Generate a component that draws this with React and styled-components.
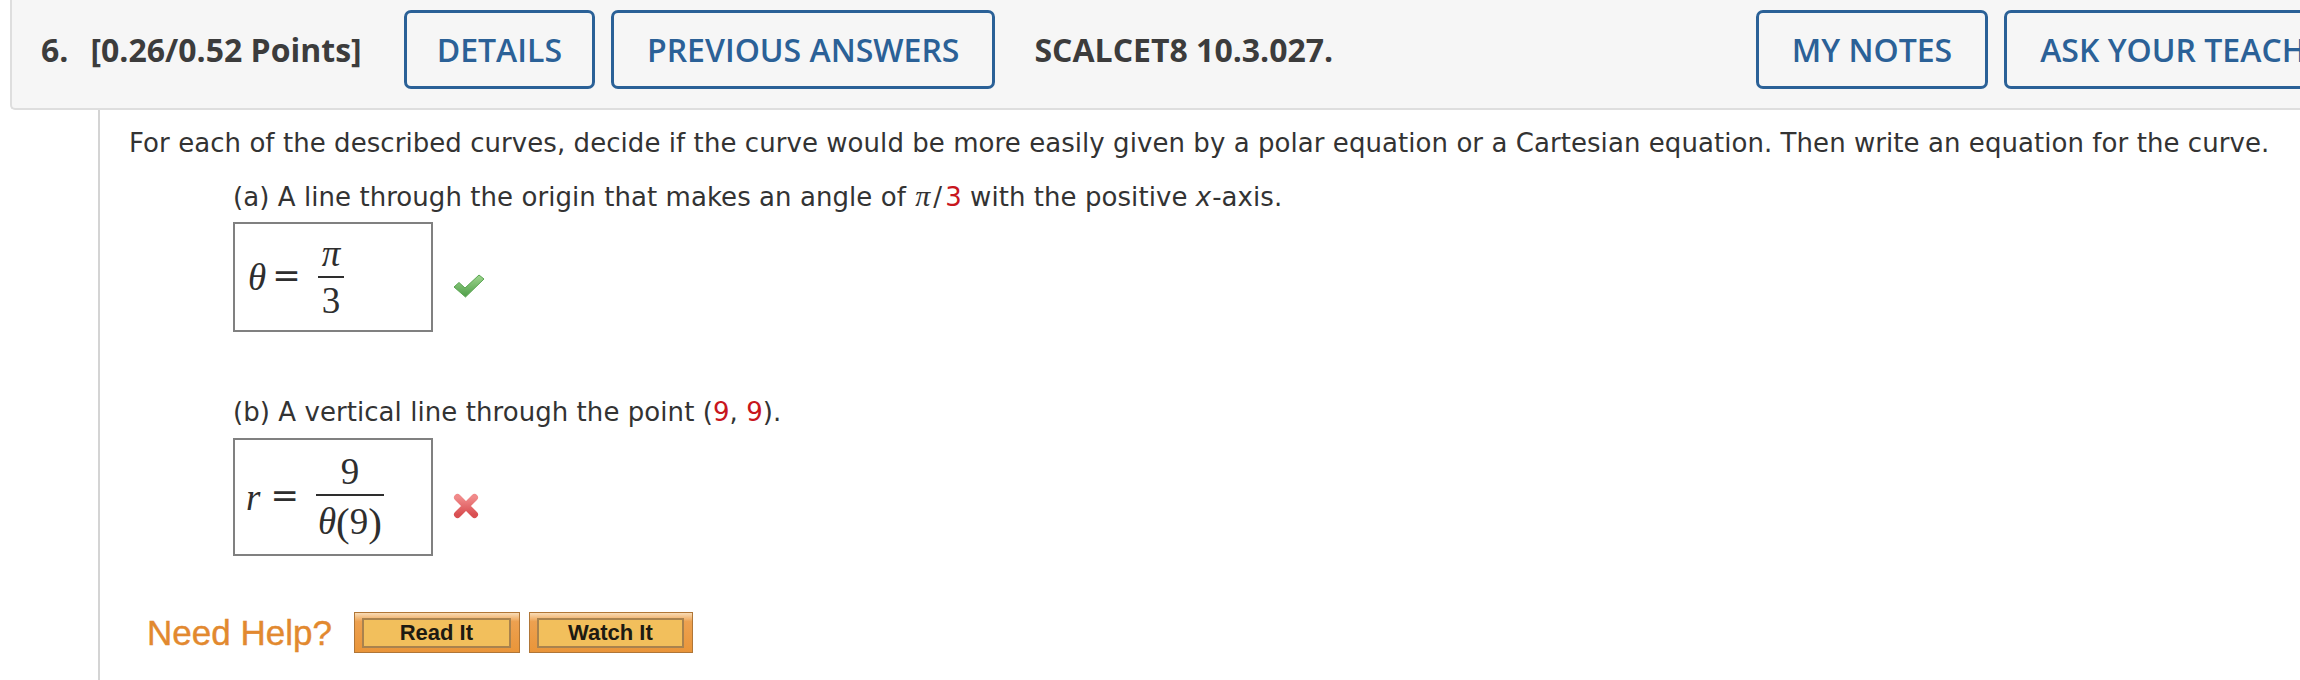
import React from 'react';
import styled, { createGlobalStyle } from 'styled-components';

const GlobalStyle = createGlobalStyle`
  html, body {
    margin: 0;
    padding: 0;
    background: #ffffff;
    overflow: hidden;
  }
  body {
    font-family: "DejaVu Sans", Verdana, sans-serif;
  }
`;

const Page = styled.div`
  width: 2430px;
  padding-left: 10px;
  box-sizing: border-box;
`;

const Header = styled.header`
  display: flex;
  align-items: center;
  box-sizing: border-box;
  height: 110px;
  padding: 10px 50px 19px 29px;
  background: #f6f6f6;
  border-left: 2px solid #dedede;
  border-bottom: 2px solid #dedede;
  border-bottom-left-radius: 5px;
  font-family: "Open Sans", "Liberation Sans", sans-serif;
`;

const HeadText = styled.span`
  font-size: 32px;
  font-weight: 700;
  color: #3c3c3c;
  white-space: nowrap;
  margin-right: ${(p) => p.$gap || 0}px;
  margin-left: ${(p) => p.$lead || 0}px;
`;

const ButtonGroup = styled.div`
  display: flex;
  gap: 16px;
  margin-left: ${(p) => (p.$right ? 'auto' : '0')};
`;

const HeadButton = styled.button`
  box-sizing: border-box;
  height: 79px;
  padding: 0 ${(p) => p.$px || 33}px;
  background: transparent;
  border: 3px solid #2b6197;
  border-radius: 7px;
  font-family: "Open Sans", "Liberation Sans", sans-serif;
  font-size: 32px;
  font-weight: 600;
  color: #2b6197;
  white-space: nowrap;
  cursor: pointer;
`;

const Body = styled.div`
  margin-left: 88px;
  border-left: 2px solid #d4d4d4;
  padding: 15px 0 0 29px;
  min-height: 600px;
  color: #333333;
  font-size: 26px;
  line-height: 36px;
  letter-spacing: 0.06px;
`;

const Para = styled.p`
  margin: 0;
  white-space: nowrap;
`;

const Part = styled.div`
  margin-left: 104px;
  margin-top: ${(p) => p.$top}px;
`;

const Prompt = styled.p`
  margin: 0;
  white-space: nowrap;
`;

const Red = styled.span`
  color: #c8161d;
`;

const MathPi = styled.span`
  font-family: "Liberation Serif", "DejaVu Serif", serif;
  font-style: italic;
  font-size: 30px;
  margin: 0 3px 0 1px;
`;

const Slash = styled.span`
  margin-right: 3px;
`;

const Em = styled.span`
  font-style: italic;
  letter-spacing: 1px;
`;

const AnswerRow = styled.div`
  display: flex;
  align-items: center;
  margin-top: ${(p) => p.$top}px;
`;

const MathBox = styled.div`
  box-sizing: border-box;
  width: 200px;
  height: ${(p) => p.$h}px;
  padding-left: ${(p) => p.$pl}px;
  border: 2px solid #808080;
  display: flex;
  align-items: center;
  font-family: "Liberation Serif", "DejaVu Serif", serif;
  font-size: 37px;
  line-height: 1;
  letter-spacing: 0;
  color: #2e2e2e;
`;

const MathVar = styled.span`
  font-style: italic;
`;

const Eq = styled.span`
  font-family: "DejaVu Serif", "Liberation Serif", serif;
  font-size: 34px;
  margin: 0 17px 0 ${(p) => p.$ml}px;
  position: relative;
  top: -2px;
`;

const Frac = styled.span`
  display: inline-flex;
  flex-direction: column;
  align-items: stretch;
`;

const Num = styled.span`
  text-align: center;
  padding: 0 4px 4px;
`;

const Den = styled.span`
  text-align: center;
  padding: ${(p) => p.$pt}px 2px 0;
  border-top: 2px solid #2e2e2e;
`;

const Paren = styled.span`
  font-size: 41px;
  position: relative;
  top: 2px;
`;

const StatusIcon = styled.span`
  display: inline-flex;
  margin-left: 20px;
  margin-top: 17px;
`;

const HelpRow = styled.div`
  display: flex;
  align-items: center;
  margin: 56px 0 0 18px;
  letter-spacing: 0;
`;

const NeedHelp = styled.span`
  font-family: "Liberation Sans", Arial, sans-serif;
  font-size: 35px;
  line-height: 1;
  color: #e2892f;
  margin-right: 22px;
  white-space: nowrap;
  -webkit-text-stroke: 0.4px #e2892f;
`;

const HelpButton = styled.button`
  box-sizing: border-box;
  display: flex;
  width: ${(p) => p.$w}px;
  height: 41px;
  padding: 5px 8px 4px 7px;
  margin-right: 9px;
  border: 1px solid #b07637;
  background: linear-gradient(#f9dcb6 0%, #eda150 22%, #e99539 100%);
  cursor: pointer;
`;

const HelpInner = styled.span`
  flex: 1;
  display: flex;
  align-items: center;
  justify-content: center;
  border: 2px solid #a9824d;
  background: #f2bf5c;
  font-family: "Liberation Sans", Arial, sans-serif;
  font-weight: 700;
  font-size: 22px;
  color: #1d1a12;
`;

function CheckIcon() {
  return (
    <svg width="32" height="26" viewBox="0 0 32 26">
      <defs>
        <linearGradient id="gchk" x1="0" y1="0" x2="0" y2="1">
          <stop offset="0" stopColor="#9fd68e" />
          <stop offset="1" stopColor="#4f9e49" />
        </linearGradient>
      </defs>
      <path
        d="M1 14 L6 9.5 L12 15 L26 2 L31 6 L12.5 24 Z"
        fill="url(#gchk)"
        stroke="#5aa552"
        strokeWidth="1"
        strokeLinejoin="round"
      />
    </svg>
  );
}

function CrossIcon() {
  return (
    <svg width="26" height="26" viewBox="0 0 26 26">
      <defs>
        <linearGradient id="gx" x1="0" y1="0" x2="0" y2="1">
          <stop offset="0" stopColor="#f08a8a" />
          <stop offset="1" stopColor="#d94f52" />
        </linearGradient>
      </defs>
      <path
        d="M4.5 4.5 L21.5 21.5 M21.5 4.5 L4.5 21.5"
        stroke="url(#gx)"
        strokeWidth="7"
        strokeLinecap="round"
        fill="none"
      />
    </svg>
  );
}

export default function App() {
  return (
    <Page>
      <GlobalStyle />
      <Header>
        <HeadText $gap={22}>6.</HeadText>
        <HeadText $gap={42}>[0.26/0.52 Points]</HeadText>
        <ButtonGroup>
          <HeadButton $px={30}>DETAILS</HeadButton>
          <HeadButton>PREVIOUS ANSWERS</HeadButton>
        </ButtonGroup>
        <HeadText $lead={39}>SCALCET8 10.3.027.</HeadText>
        <ButtonGroup $right>
          <HeadButton>MY NOTES</HeadButton>
          <HeadButton>ASK YOUR TEACHER</HeadButton>
        </ButtonGroup>
      </Header>
      <Body>
        <Para>
          For each of the described curves, decide if the curve would be more easily given by a polar
          equation or a Cartesian equation. Then write an equation for the curve.
        </Para>
        <Part $top={17}>
          <Prompt>
            (a) A line through the origin that makes an angle of <MathPi>π</MathPi>
            <Slash>/</Slash>
            <Red>3</Red> with the positive <Em>x</Em>-axis.
          </Prompt>
          <AnswerRow $top={7}>
            <MathBox $h={110} $pl={13}>
              <MathVar>θ</MathVar>
              <Eq $ml={6}>=</Eq>
              <Frac>
                <Num>
                  <MathVar>π</MathVar>
                </Num>
                <Den $pt={4}>3</Den>
              </Frac>
            </MathBox>
            <StatusIcon>
              <CheckIcon />
            </StatusIcon>
          </AnswerRow>
        </Part>
        <Part $top={62}>
          <Prompt>
            (b) A vertical line through the point (<Red>9</Red>, <Red>9</Red>).
          </Prompt>
          <AnswerRow $top={8}>
            <MathBox $h={118} $pl={11}>
              <MathVar>r</MathVar>
              <Eq $ml={10}>=</Eq>
              <Frac>
                <Num>9</Num>
                <Den $pt={4}>
                  <MathVar>θ</MathVar>
                  <Paren>(</Paren>9<Paren>)</Paren>
                </Den>
              </Frac>
            </MathBox>
            <StatusIcon>
              <CrossIcon />
            </StatusIcon>
          </AnswerRow>
        </Part>
        <HelpRow>
          <NeedHelp>Need Help?</NeedHelp>
          <HelpButton $w={166}>
            <HelpInner>Read It</HelpInner>
          </HelpButton>
          <HelpButton $w={164}>
            <HelpInner>Watch It</HelpInner>
          </HelpButton>
        </HelpRow>
      </Body>
    </Page>
  );
}
